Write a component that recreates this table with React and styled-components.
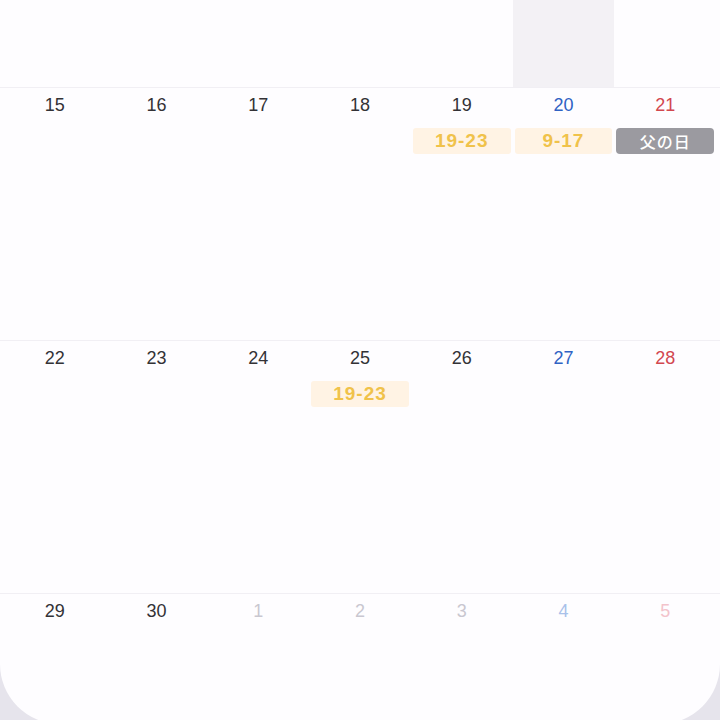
import React from "react";
import styled, { createGlobalStyle } from "styled-components";

const GlobalStyle = createGlobalStyle`
  html, body {
    margin: 0;
    padding: 0;
    width: 720px;
    height: 720px;
    overflow: hidden;
    background: #e6e4ec;
  }
`;

const weeks = [
  [
    { d: 15 },
    { d: 16 },
    { d: 17 },
    { d: 18 },
    { d: 19, chip: "19-23" },
    { d: 20, tone: "sat", chip: "9-17" },
    { d: 21, tone: "sun", holiday: "父の日" },
  ],
  [
    { d: 22 },
    { d: 23 },
    { d: 24 },
    { d: 25, chip: "19-23" },
    { d: 26 },
    { d: 27, tone: "sat" },
    { d: 28, tone: "sun" },
  ],
  [
    { d: 29 },
    { d: 30 },
    { d: 1, tone: "fade" },
    { d: 2, tone: "fade" },
    { d: 3, tone: "fade" },
    { d: 4, tone: "fadeSat" },
    { d: 5, tone: "fadeSun" },
  ],
];

const toneColor = {
  sat: "#2f62c4",
  sun: "#d2474f",
  fade: "#c9c7d0",
  fadeSat: "#a9c1ea",
  fadeSun: "#f3c3cb",
};

export default function App() {
  return (
    <Page>
      <GlobalStyle />
      <Card>
        <TopRow>
          {Array.from({ length: 7 }).map((_, i) => (
            <TopCell key={i} $today={i === 5} />
          ))}
        </TopRow>
        {weeks.map((week, wi) => (
          <WeekRow key={wi} $last={wi === weeks.length - 1}>
            {week.map((day, di) => (
              <DayCell key={di}>
                <DayNumber $color={toneColor[day.tone]}>{day.d}</DayNumber>
                {day.chip && <ShiftChip>{day.chip}</ShiftChip>}
                {day.holiday && <HolidayChip>{day.holiday}</HolidayChip>}
              </DayCell>
            ))}
          </WeekRow>
        ))}
      </Card>
    </Page>
  );
}

const Page = styled.div`
  width: 720px;
  height: 720px;
  overflow: hidden;
  background: #e6e4ec;
`;

const Card = styled.div`
  width: 720px;
  height: 724px;
  display: flex;
  flex-direction: column;
  background: #fefdff;
  border-radius: 0 0 60px 60px;
  overflow: hidden;
`;

const TopRow = styled.div`
  height: 87px;
  flex-shrink: 0;
  display: grid;
  grid-template-columns: repeat(7, 1fr);
  padding: 0 4px;
  border-bottom: 1px solid #f1eff4;
`;

const TopCell = styled.div`
  background: ${(p) => (p.$today ? "#f3f1f5" : "transparent")};
`;

const WeekRow = styled.div`
  height: ${(p) => (p.$last ? "auto" : "252px")};
  flex: ${(p) => (p.$last ? "1" : "none")};
  display: grid;
  grid-template-columns: repeat(7, 1fr);
  padding: 0 4px;
  border-bottom: ${(p) => (p.$last ? "none" : "1px solid #f1eff4")};
`;

const DayCell = styled.div`
  display: flex;
  flex-direction: column;
  align-items: stretch;
  padding: 6px 2px 0 2px;
`;

const DayNumber = styled.div`
  height: 23px;
  line-height: 23px;
  text-align: center;
  font-family: "Liberation Sans", Arial, sans-serif;
  font-size: 18px;
  color: ${(p) => p.$color || "#333236"};
  margin-bottom: 11px;
`;

const ShiftChip = styled.div`
  height: 26px;
  line-height: 26px;
  text-align: center;
  border-radius: 3px;
  background: #fff3e4;
  color: #f0c24a;
  font-family: "Liberation Sans", Arial, sans-serif;
  font-weight: 700;
  font-size: 19px;
  letter-spacing: 1px;
`;

const HolidayChip = styled.div`
  height: 26px;
  line-height: 26px;
  text-align: center;
  border-radius: 4px;
  background: #9b9aa0;
  color: #ffffff;
  font-family: "Noto Sans CJK JP", sans-serif;
  font-weight: 500;
  font-size: 16px;
  letter-spacing: 1px;
`;
